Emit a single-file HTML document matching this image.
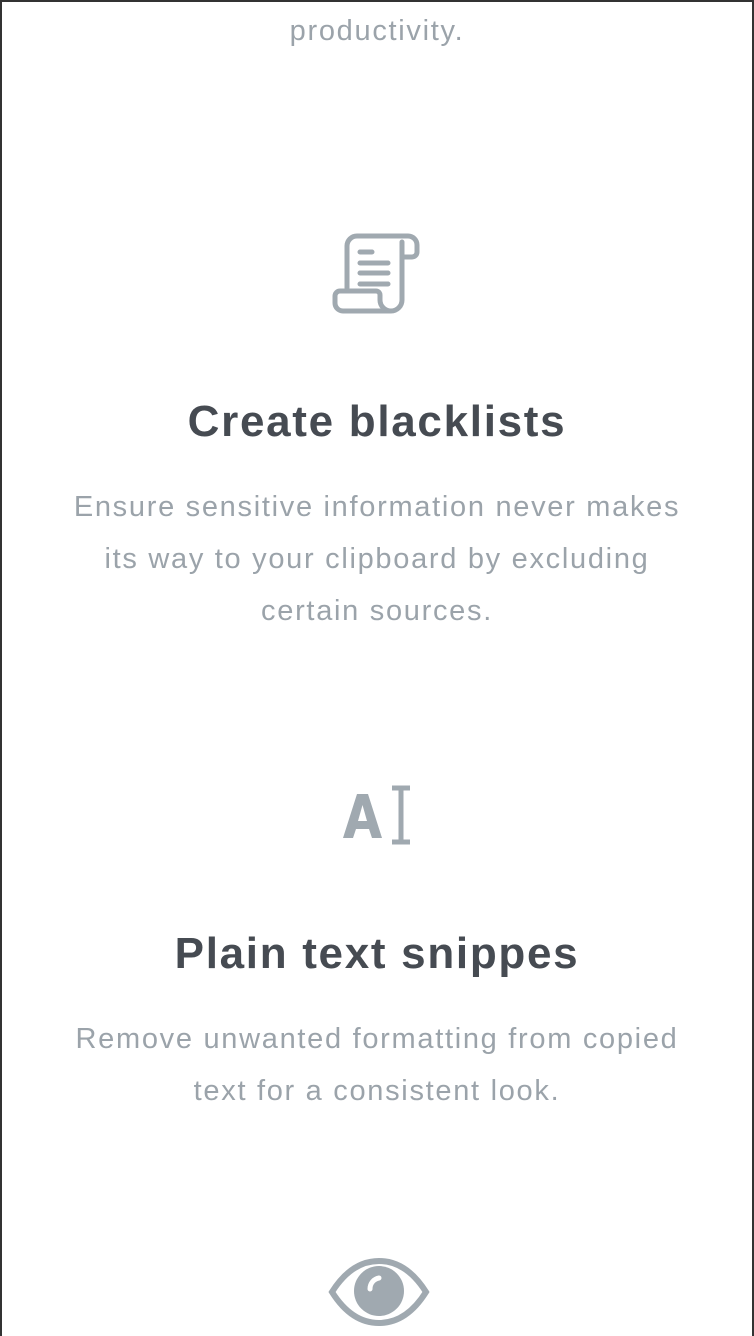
<!DOCTYPE html>
<html><head><style>
html,body{margin:0;padding:0}
body{width:754px;height:1336px;position:relative;overflow:hidden;background:#fff;font-family:"Liberation Sans",sans-serif;box-sizing:border-box;border-left:2px solid #333;border-right:2px solid #333;border-top:2px solid #333}
.t{position:absolute;left:0;width:750px;text-align:center}
h2{margin:0;font-size:44px;font-weight:bold;color:#464b52;letter-spacing:1.7px}
p{margin:0;font-size:29px;line-height:52px;color:#9ba3aa;letter-spacing:1.7px}
</style></head><body>
<div class="t" style="top:3px"><p>productivity.</p></div>
<svg style="position:absolute;left:328px;top:228px" width="92" height="88" viewBox="0 0 92 88" fill="none" stroke="#a0a9b0" stroke-width="5" stroke-linecap="round" stroke-linejoin="round">
<path d="M17 58 V16 a10 10 0 0 1 10 -10 H78 a9 9 0 0 1 9 9 V22 a5 5 0 0 1 -5 5 H72"/>
<path d="M72 12 V70 a11 11 0 0 1 -11 11 H13 a8 8 0 0 1 -8 -8 V66 a5 5 0 0 1 5 -5 H46 a4 4 0 0 1 4 4 V70 a11 11 0 0 0 11 11"/>
<path d="M30 22 H42 M30 33 H58 M30 43 H58 M30 54 H58"/>
</svg>
<div class="t" style="top:395px"><h2>Create blacklists</h2></div>
<div class="t" style="top:479px"><p>Ensure sensitive information never makes<br>its way to your clipboard by excluding<br>certain sources.</p></div>
<svg style="position:absolute;left:338px;top:782px" width="74" height="64" viewBox="0 0 74 64">
<path d="M3 54 L17 10 H28 L42 54 H32 L29 45 H16 L13 54 Z M18 37 H27 L22.5 21 Z" fill="#a0a9b0"/>
<path d="M52 4 H70 M61 4 V58 M52 58 H70" stroke="#a0a9b0" stroke-width="5" fill="none"/>
</svg>
<div class="t" style="top:927px"><h2>Plain text snippes</h2></div>
<div class="t" style="top:1011px"><p>Remove unwanted formatting from copied<br>text for a consistent look.</p></div>
<svg style="position:absolute;left:325px;top:1255px" width="104" height="70" viewBox="0 0 104 70">
<path d="M5 35 C22 8 40 4 52 4 C64 4 82 8 99 35 C82 62 64 66 52 66 C40 66 22 62 5 35 Z" fill="none" stroke="#a0a9b0" stroke-width="6"/>
<circle cx="52" cy="34" r="25" fill="#a0a9b0"/>
<path d="M43 32 C43 26 47 22 52 21" stroke="#fff" stroke-width="5" fill="none" stroke-linecap="round"/>
</svg>
</body></html>
